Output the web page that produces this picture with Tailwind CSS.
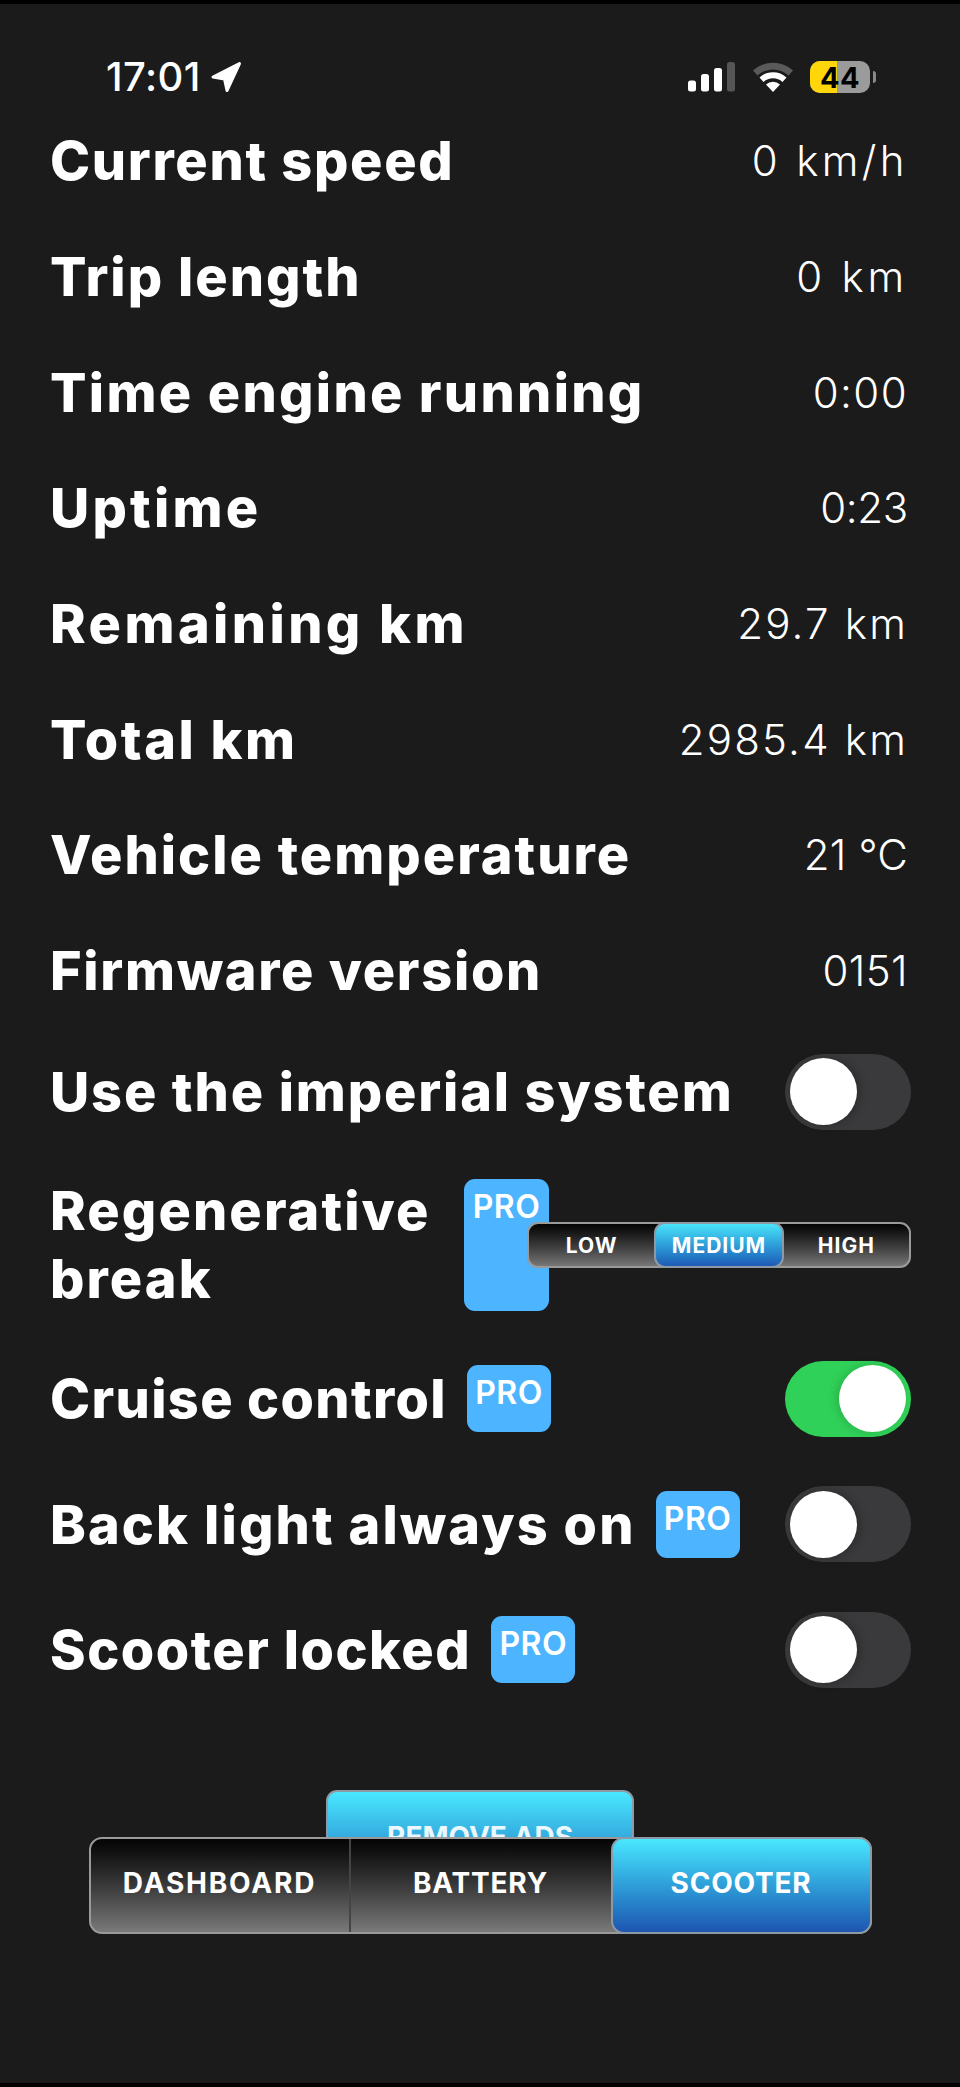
<!DOCTYPE html>
<html><head><meta charset="utf-8"><script src="https://cdn.jsdelivr.net/npm/@tailwindcss/browser@4"></script></head>
<body class="bg-black">
<div class="relative flex flex-col w-[960px] h-[2087px] bg-[#1b1b1b] border-t-[4px] border-b-[4px] border-black text-white font-['Inter',sans-serif] overflow-hidden">
  <!-- status bar -->
  <div class="flex items-center justify-between h-[99px] pl-[106px] pr-[84px] pt-[51px] pb-[4px]">
    <div class="flex items-center gap-[9px]">
      <span class="text-[40px] font-medium leading-none tracking-[0.4px]">17:01</span>
      <svg width="32" height="32" viewBox="0 0 32 32"><path d="M29.500 2.500 L3 16 L14.500 18 L17 29.500 Z" fill="#fff" stroke="#fff" stroke-width="3" stroke-linejoin="round"/></svg>
    </div>
    <div class="flex items-center">
      <svg width="47" height="30" viewBox="0 0 47 30"><rect x="0" y="18.500" width="8" height="11" rx="2.500" fill="#fff"/><rect x="13" y="12" width="8" height="17.500" rx="2.500" fill="#fff"/><rect x="26" y="6" width="8" height="23.500" rx="2.500" fill="#fff"/><rect x="39" y="0" width="8" height="29.500" rx="2.500" fill="#555"/></svg>
      <svg class="ml-[18px]" width="40" height="30" viewBox="0 0 40 30"><path d="M0 8.500 A30 30 0 0 1 40 8.500 L35.500 13.500 A23 23 0 0 0 4.500 13.500 Z" fill="#5a5a5a"/><path d="M6.500 15.500 A20 20 0 0 1 33.500 15.500 L29.500 20 A14 14 0 0 0 10.500 20 Z" fill="#fff"/><path d="M13 22.500 A10 10 0 0 1 27 22.500 L20 30 Z" fill="#fff"/></svg>
      <div class="ml-[17px] relative flex w-[60px] h-[32px] rounded-[10px] overflow-hidden bg-[#9b9b9b] items-center justify-center">
        <div class="absolute left-0 top-0 bottom-0 w-[27px] bg-[#ffd60a]"></div>
        <span class="relative text-black text-[29px] font-bold leading-none tracking-[0.5px]">44</span>
      </div>
      <div class="w-[3px] h-[12px] ml-[3px] bg-[#8a8a8a] rounded-r"></div>
    </div>
  </div>
  <!-- info rows -->
  <div class="flex flex-col pl-[50px] pr-[52px]">
    <div class="flex items-center justify-between h-[115.7px]"><span class="text-[54px] font-extrabold tracking-[1.7px]">Current speed</span><span class="text-[42px] font-light tracking-[3.4px]">0 km/h</span></div>
    <div class="flex items-center justify-between h-[115.7px]"><span class="text-[54px] font-extrabold tracking-[2px]">Trip length</span><span class="text-[42px] font-light tracking-[3.8px]">0 km</span></div>
    <div class="flex items-center justify-between h-[115.7px]"><span class="text-[54px] font-extrabold tracking-[2.3px]">Time engine running</span><span class="text-[42px] font-light tracking-[1.4px]">0:00</span></div>
    <div class="flex items-center justify-between h-[115.7px]"><span class="text-[54px] font-extrabold tracking-[3.2px]">Uptime</span><span class="text-[42px] font-light tracking-[-0.3px]">0:23</span></div>
    <div class="flex items-center justify-between h-[115.7px]"><span class="text-[54px] font-extrabold tracking-[3.4px]">Remaining km</span><span class="text-[42px] font-light tracking-[2.2px]">29.7 km</span></div>
    <div class="flex items-center justify-between h-[115.7px]"><span class="text-[54px] font-extrabold tracking-[2.5px]">Total km</span><span class="text-[42px] font-light tracking-[2.2px]">2985.4 km</span></div>
    <div class="flex items-center justify-between h-[115.7px]"><span class="text-[54px] font-extrabold tracking-[2px]">Vehicle temperature</span><span class="text-[42px] font-light tracking-[0.2px]">21 °C</span></div>
    <div class="flex items-center justify-between h-[115.7px]"><span class="text-[54px] font-extrabold tracking-[1.7px]">Firmware version</span><span class="text-[42px] font-light tracking-[0.4px]">0151</span></div>
  </div>
  <!-- settings -->
  <div class="flex flex-col gap-[49.5px] mt-[25px] pl-[50px] pr-[49px]">
    <div class="flex items-center justify-between h-[76px]">
      <span class="text-[54px] font-extrabold tracking-[1.85px] whitespace-nowrap -mt-[1px]">Use the imperial system</span>
      <div class="flex items-center w-[126px] h-[76px] rounded-full bg-[#3a3a3c] pl-[5px]"><div class="w-[67px] h-[67px] rounded-full bg-white shadow-[3px_0_10px_rgba(0,0,0,0.25)]"></div></div>
    </div>
    <div class="flex items-center h-[132px]">
      <span class="w-[414px] text-[54px] font-extrabold tracking-[2.1px] leading-[68px]">Regenerative<br>break</span>
      <div class="w-[85px] h-[132px] rounded-[11px] bg-[#4db5ff] text-center text-[32px] font-semibold tracking-[0.5px] leading-[55px]">PRO</div>
      <div class="flex items-stretch w-[384px] h-[46px] -ml-[22px] rounded-[11px] border-2 border-[#9a9a9a] bg-gradient-to-b from-[#050505] to-[#777] text-[21px] font-bold tracking-[1px]">
        <div class="flex-1 flex items-center justify-center pt-[1px]">LOW</div>
        <div class="flex-1 flex items-center justify-center pt-[1px] rounded-[11px] -my-[2px] border-2 border-[#8d9aa5] bg-gradient-to-b from-[#4ae4fa] to-[#1f5ab5]">MEDIUM</div>
        <div class="flex-1 flex items-center justify-center pt-[1px]">HIGH</div>
      </div>
    </div>
    <div class="flex items-center justify-between h-[76px]">
      <div class="flex items-center gap-[20px]">
        <span class="text-[54px] font-extrabold tracking-[1.35px] whitespace-nowrap">Cruise control</span>
        <div class="w-[84px] h-[67px] rounded-[11px] bg-[#4db5ff] text-center text-[32px] font-semibold tracking-[0.5px] leading-[55px]">PRO</div>
      </div>
      <div class="flex items-center justify-end w-[126px] h-[76px] rounded-full bg-[#30d158] pr-[5px]"><div class="w-[67px] h-[67px] rounded-full bg-white shadow-[-3px_0_10px_rgba(0,0,0,0.15)]"></div></div>
    </div>
    <div class="flex items-center justify-between h-[76px]">
      <div class="flex items-center gap-[20px]">
        <span class="text-[54px] font-extrabold tracking-[2.1px] whitespace-nowrap">Back light always on</span>
        <div class="w-[84px] h-[67px] rounded-[11px] bg-[#4db5ff] text-center text-[32px] font-semibold tracking-[0.5px] leading-[55px]">PRO</div>
      </div>
      <div class="flex items-center w-[126px] h-[76px] rounded-full bg-[#3a3a3c] pl-[5px]"><div class="w-[67px] h-[67px] rounded-full bg-white shadow-[3px_0_10px_rgba(0,0,0,0.25)]"></div></div>
    </div>
    <div class="flex items-center justify-between h-[76px]">
      <div class="flex items-center gap-[20px]">
        <span class="text-[54px] font-extrabold tracking-[1.5px] whitespace-nowrap">Scooter locked</span>
        <div class="w-[84px] h-[67px] rounded-[11px] bg-[#4db5ff] text-center text-[32px] font-semibold tracking-[0.5px] leading-[55px]">PRO</div>
      </div>
      <div class="flex items-center w-[126px] h-[76px] rounded-full bg-[#3a3a3c] pl-[5px]"><div class="w-[67px] h-[67px] rounded-full bg-white shadow-[3px_0_10px_rgba(0,0,0,0.25)]"></div></div>
    </div>
  </div>
  <!-- bottom -->
  <div class="flex flex-col items-center mt-[102px]">
    <div class="w-[308px] h-[60px] rounded-t-[11px] border-2 border-b-0 border-[#8d9aa5] bg-gradient-to-b from-[#4ae8ff] to-[#2f9ad6] text-center text-[28px] font-bold leading-[90px] text-white/90 overflow-hidden">REMOVE ADS</div>
    <div class="relative flex w-[783px] h-[97px] -mt-[13px] rounded-[13px] border-2 border-[#9a9a9a] bg-gradient-to-b from-[#050505] to-[#7a7a7a] text-[28px] font-bold">
      <div class="w-[260px] flex items-center justify-center border-r-2 border-[#444] pb-[4px] tracking-[1.8px]">DASHBOARD</div>
      <div class="w-[260px] flex items-center justify-center pb-[4px] tracking-[0.8px]">BATTERY</div>
      <div class="flex-1 flex items-center justify-center rounded-[13px] -my-[2px] -mr-[2px] border-2 border-[#8d9aa5] bg-gradient-to-b from-[#4ae8ff] to-[#1f55b0] pb-[4px] tracking-[0.8px]">SCOOTER</div>
    </div>
  </div>
</div>
</body></html>
